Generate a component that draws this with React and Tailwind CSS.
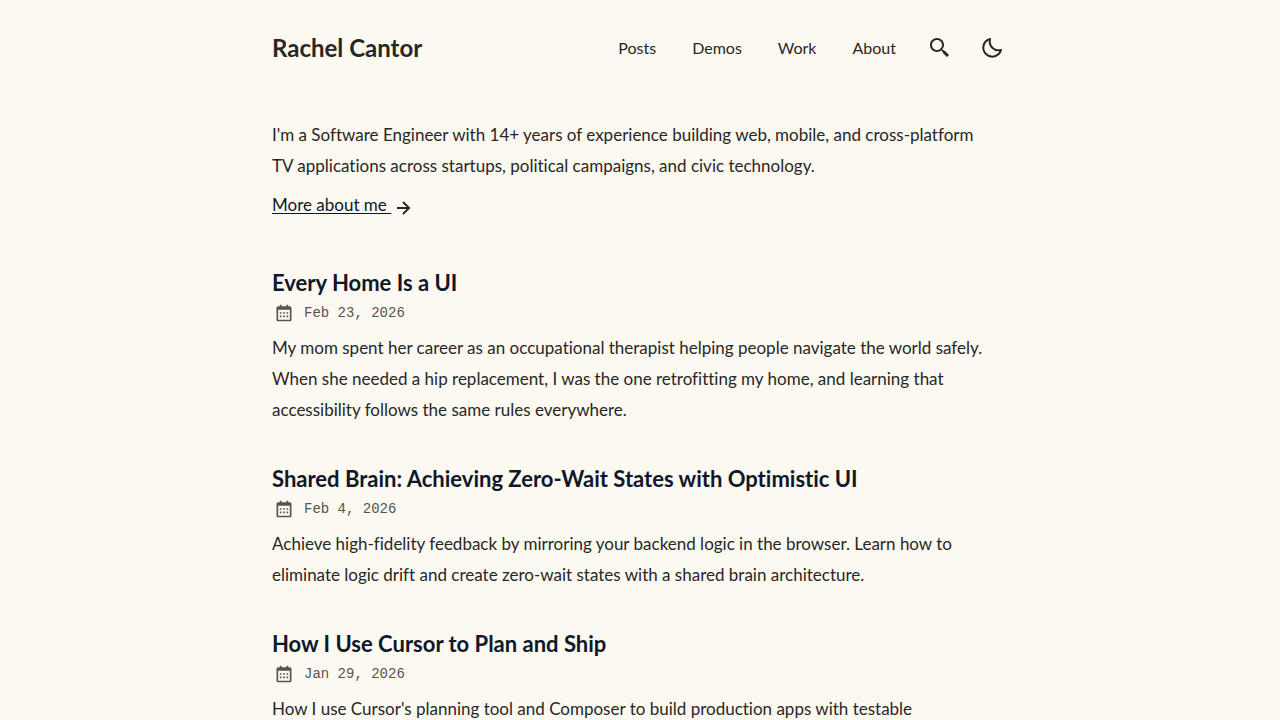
import { BiCalendar, BiMoon, BiRightArrowAlt, BiSearchAlt2 } from 'react-icons/bi';

const navLinks = [
  { label: 'Posts', href: '#posts' },
  { label: 'Demos', href: '#demos' },
  { label: 'Work', href: '#work' },
  { label: 'About', href: '#about' },
];

const posts = [
  {
    slug: 'every-home-is-a-ui',
    title: 'Every Home Is a UI',
    date: 'Feb 23, 2026',
    description:
      'My mom spent her career as an occupational therapist helping people navigate the world safely. When she needed a hip replacement, I was the one retrofitting my home, and learning that accessibility follows the same rules everywhere.',
  },
  {
    slug: 'shared-brain',
    title: 'Shared Brain: Achieving Zero-Wait States with Optimistic UI',
    date: 'Feb 4, 2026',
    description:
      'Achieve high-fidelity feedback by mirroring your backend logic in the browser. Learn how to eliminate logic drift and create zero-wait states with a shared brain architecture.',
  },
  {
    slug: 'how-i-use-cursor',
    title: 'How I Use Cursor to Plan and Ship',
    date: 'Jan 29, 2026',
    description: "How I use Cursor's planning tool and Composer to build production apps with testable",
  },
];

function Header() {
  return (
    <header className="flex items-center justify-between pt-8">
      <a href="#home" className="text-2xl font-bold">
        Rachel Cantor
      </a>
      <nav className="flex items-center pr-1">
        <ul className="flex items-center gap-9 text-base">
          {navLinks.map((link) => (
            <li key={link.label}>
              <a href={link.href}>{link.label}</a>
            </li>
          ))}
        </ul>
        <a href="#search" aria-label="Search" className="ml-8">
          <BiSearchAlt2 className="h-6 w-6" />
        </a>
        <button type="button" aria-label="Toggle theme" className="ml-7">
          <BiMoon className="h-6 w-6" />
        </button>
      </nav>
    </header>
  );
}

function PostCard({ post }) {
  return (
    <li>
      <h2 className="text-[22px] font-bold leading-7 text-[#0f172a]">
        <a href={`#${post.slug}`}>{post.title}</a>
      </h2>
      <div className="flex h-8 items-center gap-2 text-[#555450]">
        <span className="flex h-6 w-6 items-center justify-center">
          <BiCalendar className="h-5 w-5" />
        </span>
        <time className="font-['Liberation_Mono',monospace] text-sm">{post.date}</time>
      </div>
      <p className="mt-[3px] max-w-[720px] text-[17px] leading-[31px]">{post.description}</p>
    </li>
  );
}

export default function App() {
  return (
    <div className="min-h-screen bg-[#fcf9f0] font-['Lato',sans-serif] text-[#282728] [font-variant-ligatures:none]">
      <div className="mx-auto max-w-3xl px-4">
        <Header />
        <main>
          <section className="pt-[55px]">
            <p className="max-w-[720px] text-[17px] leading-[31px]">
              I'm a Software Engineer with 14+ years of experience building web, mobile, and cross-platform TV
              applications across startups, political campaigns, and civic technology.
            </p>
            <div className="mt-2 flex items-end text-[17px] leading-[31px]">
              <a href="#about" className="whitespace-pre text-[#0f172a] underline underline-offset-2">
                {'More about me '}
              </a>
              <BiRightArrowAlt className="h-6 w-6" />
            </div>
          </section>
          <ul className="mt-[49px] space-y-10">
            {posts.map((post) => (
              <PostCard key={post.slug} post={post} />
            ))}
          </ul>
        </main>
      </div>
    </div>
  );
}
